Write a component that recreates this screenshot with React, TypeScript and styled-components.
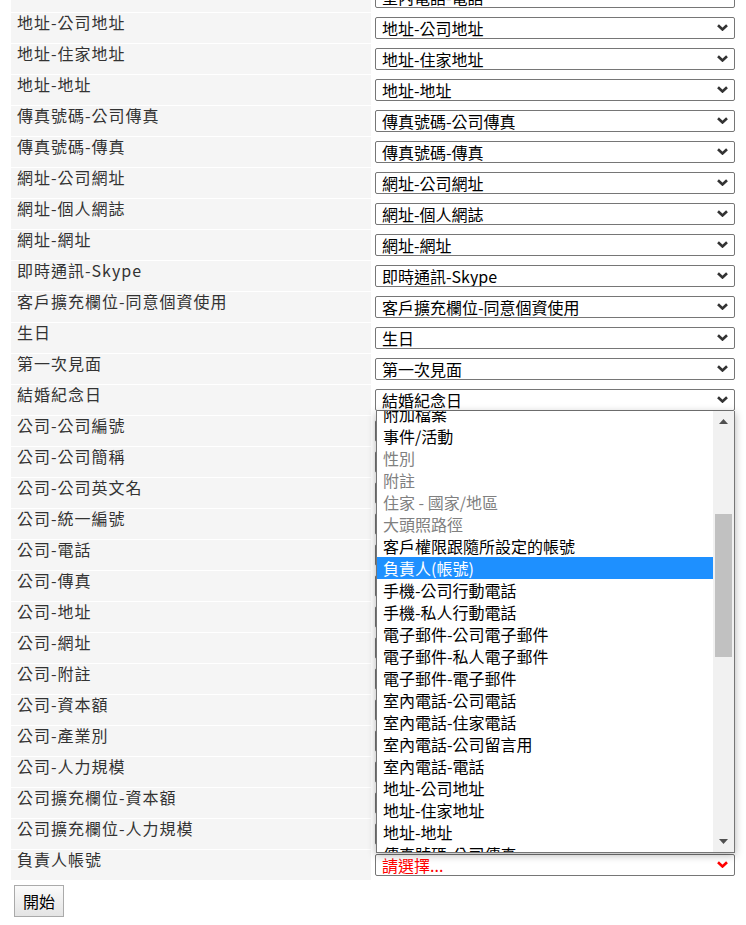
import React from 'react';
import styled, { createGlobalStyle } from 'styled-components';

const FONT = '"Noto Sans CJK TC", "Noto Sans", sans-serif';

const fields = [
  '室內電話-電話',
  '地址-公司地址',
  '地址-住家地址',
  '地址-地址',
  '傳真號碼-公司傳真',
  '傳真號碼-傳真',
  '網址-公司網址',
  '網址-個人網誌',
  '網址-網址',
  '即時通訊-Skype',
  '客戶擴充欄位-同意個資使用',
  '生日',
  '第一次見面',
  '結婚紀念日',
  '公司-公司編號',
  '公司-公司簡稱',
  '公司-公司英文名',
  '公司-統一編號',
  '公司-電話',
  '公司-傳真',
  '公司-地址',
  '公司-網址',
  '公司-附註',
  '公司-資本額',
  '公司-產業別',
  '公司-人力規模',
  '公司擴充欄位-資本額',
  '公司擴充欄位-人力規模',
];

type Opt = { text: string; disabled?: boolean; selected?: boolean };

const popupOptions: Opt[] = [
  { text: '附加檔案' },
  { text: '事件/活動' },
  { text: '性別', disabled: true },
  { text: '附註', disabled: true },
  { text: '住家 - 國家/地區', disabled: true },
  { text: '大頭照路徑', disabled: true },
  { text: '客戶權限跟隨所設定的帳號' },
  { text: '負責人(帳號)', selected: true },
  { text: '手機-公司行動電話' },
  { text: '手機-私人行動電話' },
  { text: '電子郵件-公司電子郵件' },
  { text: '電子郵件-私人電子郵件' },
  { text: '電子郵件-電子郵件' },
  { text: '室內電話-公司電話' },
  { text: '室內電話-住家電話' },
  { text: '室內電話-公司留言用' },
  { text: '室內電話-電話' },
  { text: '地址-公司地址' },
  { text: '地址-住家地址' },
  { text: '地址-地址' },
  { text: '傳真號碼-公司傳真' },
];

const GlobalStyle = createGlobalStyle`
  html, body {
    margin: 0;
    padding: 0;
    background: #fff;
  }
  body {
    font-family: ${FONT};
    overflow: hidden;
  }
`;

const Chevron: React.FC<{ color: string }> = ({ color }) => (
  <ChevronIcon width="11" height="7" viewBox="0 0 11 7">
    <path d="M1 1.2l4.5 4.3 4.5-4.3" fill="none" stroke={color} strokeWidth="2.6" />
  </ChevronIcon>
);

const Triangle: React.FC<{ up?: boolean }> = ({ up }) => (
  <svg width="9" height="5" viewBox="0 0 9 5">
    <polygon points={up ? '0,5 4.5,0 9,5' : '0,0 4.5,5 9,0'} fill="#505050" />
  </svg>
);

const FieldSelect: React.FC<{ value: string; placeholder?: boolean; children?: React.ReactNode }> = ({
  value,
  placeholder,
  children,
}) => (
  <SelectCell>
    <SelectWrap>
      <Select $placeholder={placeholder} defaultValue={value}>
        <option value={value}>{value}</option>
        {fields
          .filter((f) => f !== value)
          .map((f) => (
            <option key={f} value={f}>
              {f}
            </option>
          ))}
      </Select>
      <Chevron color={placeholder ? '#ff0000' : '#333'} />
    </SelectWrap>
    {children}
  </SelectCell>
);

const OpenList = () => (
  <Popup>
    <Options>
      {popupOptions.map((o) => (
        <Option key={o.text} $disabled={o.disabled} $selected={o.selected}>
          {o.text}
        </Option>
      ))}
    </Options>
    <Track>
      <ArrowButton>
        <Triangle up />
      </ArrowButton>
      <ThumbArea>
        <Thumb $top={84} $height={143} />
      </ThumbArea>
      <ArrowButton>
        <Triangle />
      </ArrowButton>
    </Track>
  </Popup>
);

export default function App() {
  return (
    <>
      <GlobalStyle />
      <Page>
        <Table>
          {fields.map((f) => (
            <Row key={f}>
              <Label>{f}</Label>
              <FieldSelect value={f}>{f === '結婚紀念日' && <OpenList />}</FieldSelect>
            </Row>
          ))}
          <Row>
            <Label>負責人帳號</Label>
            <FieldSelect value="請選擇..." placeholder />
          </Row>
        </Table>
        <StartButton>開始</StartButton>
      </Page>
    </>
  );
}

const Page = styled.div`
  padding: 0 0 0 11px;
  margin-top: -18px;
`;

const Table = styled.div`
  display: flex;
  flex-direction: column;
  gap: 1px;
`;

const Row = styled.div`
  display: grid;
  grid-template-columns: 360px 360px;
  column-gap: 4px;
  height: 30px;
`;

const Label = styled.div`
  background: #f5f5f5;
  padding: 0 6px;
  font-size: 16px;
  line-height: 19px;
  letter-spacing: 1px;
  color: #333;
  white-space: nowrap;
`;

const SelectCell = styled.div`
  position: relative;
  padding-top: 4px;
`;

const SelectWrap = styled.div`
  position: relative;
  height: 22px;
`;

const Select = styled.select<{ $placeholder?: boolean }>`
  appearance: none;
  -webkit-appearance: none;
  box-sizing: border-box;
  display: block;
  width: 360px;
  height: 22px;
  margin: 0;
  padding: 0 24px 0 6px;
  border: 1px solid #767676;
  border-radius: 2px;
  background: #fff;
  font-family: ${FONT};
  font-size: 16px;
  line-height: 20px;
  color: ${(p) => (p.$placeholder ? '#ff0000' : '#000')};
  outline: none;
`;

const ChevronIcon = styled.svg`
  position: absolute;
  right: 7px;
  top: 7px;
  pointer-events: none;
`;

const Popup = styled.div`
  position: absolute;
  top: 26px;
  left: 1px;
  z-index: 10;
  box-sizing: border-box;
  width: 359px;
  height: 442px;
  display: flex;
  background: #fff;
  border: 1px solid #767676;
  border-top: none;
  box-shadow: 0 2px 8px rgba(0, 0, 0, 0.3);
  overflow: hidden;
`;

const Options = styled.div`
  flex: 1;
  margin-top: -8px;
  overflow: hidden;
`;

const Option = styled.div<{ $disabled?: boolean; $selected?: boolean }>`
  height: 22px;
  line-height: 22px;
  padding-left: 6px;
  font-size: 16px;
  white-space: nowrap;
  color: ${(p) => (p.$selected ? '#fff' : p.$disabled ? '#808080' : '#000')};
  background: ${(p) => (p.$selected ? '#1e90ff' : 'transparent')};
`;

const Track = styled.div`
  width: 21px;
  display: flex;
  flex-direction: column;
  background: #f1f1f1;
`;

const ArrowButton = styled.div`
  height: 17px;
  display: flex;
  align-items: center;
  justify-content: center;
  padding-top: 2px;

  &:last-child {
    padding-top: 0;
    padding-bottom: 2px;
  }
`;

const ThumbArea = styled.div`
  flex: 1;
`;

const Thumb = styled.div<{ $top: number; $height: number }>`
  margin: ${(p) => p.$top}px 2px 0;
  height: ${(p) => p.$height}px;
  background: #c1c1c1;
`;

const StartButton = styled.button`
  margin: 5px 0 0 3px;
  width: 50px;
  height: 32px;
  padding: 0;
  border: 1px solid #aaa;
  border-radius: 0;
  background: linear-gradient(#fbfbfb, #e4e4e4);
  font-family: ${FONT};
  font-size: 16px;
  color: #000;
`;
